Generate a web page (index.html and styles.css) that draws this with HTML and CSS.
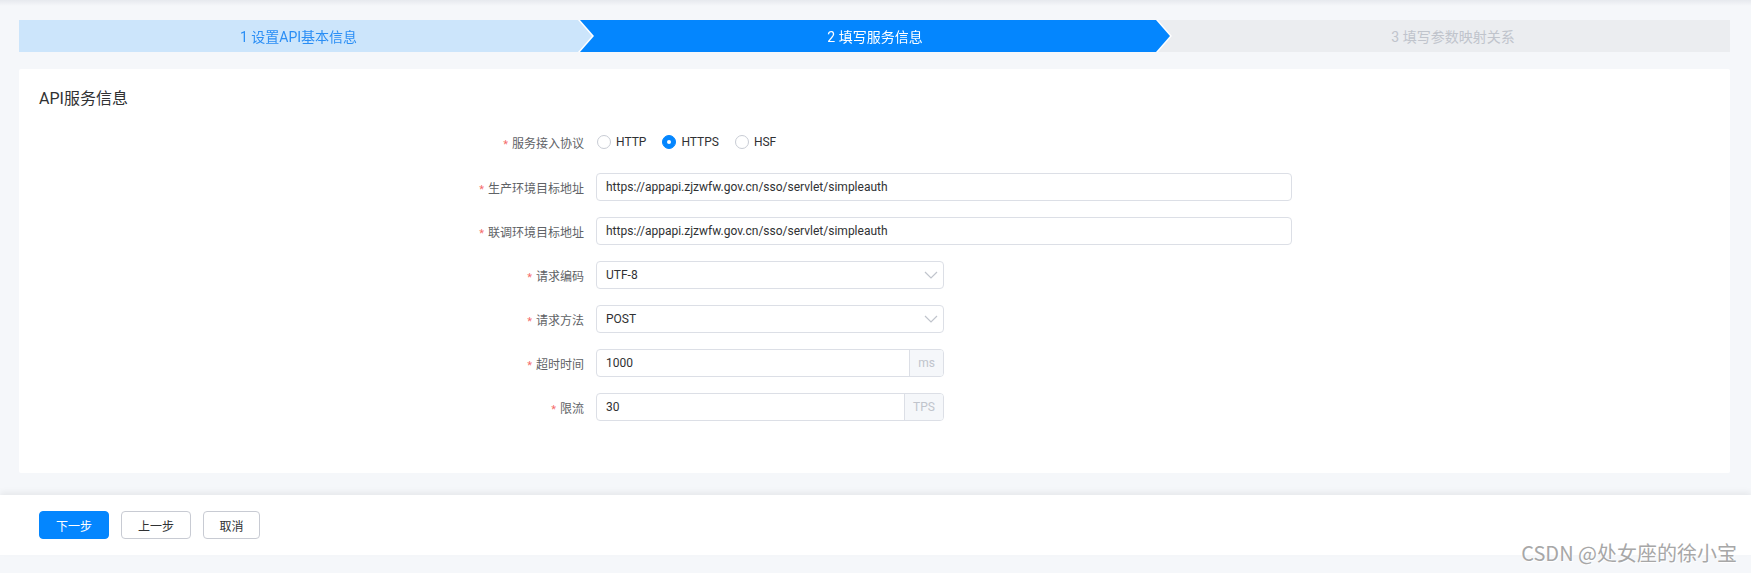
FILE: index.html
```html
<!DOCTYPE html>
<html lang="zh-CN">
<head>
<meta charset="utf-8">
<title>API服务信息</title>
<link rel="stylesheet" href="styles.css">
</head>
<body>
<div class="topshade"></div>
<div class="main">
  <div class="steps">
    <div class="step step-done"><div class="step-shape">1 设置API基本信息</div></div>
    <div class="step step-active"><div class="step-shape">2 填写服务信息</div></div>
    <div class="step step-wait"><div class="step-shape">3 填写参数映射关系</div></div>
  </div>
  <div class="card">
    <div class="card-title">API服务信息</div>
    <div class="form">
      <div class="row">
        <label class="label"><span class="req">*</span>服务接入协议</label>
        <div class="radios">
          <span class="radio"><span class="dot"></span>HTTP</span>
          <span class="radio checked"><span class="dot"></span>HTTPS</span>
          <span class="radio"><span class="dot"></span>HSF</span>
        </div>
      </div>
      <div class="row">
        <label class="label"><span class="req">*</span>生产环境目标地址</label>
        <div class="input long">https://appapi.zjzwfw.gov.cn/sso/servlet/simpleauth</div>
      </div>
      <div class="row">
        <label class="label"><span class="req">*</span>联调环境目标地址</label>
        <div class="input long">https://appapi.zjzwfw.gov.cn/sso/servlet/simpleauth</div>
      </div>
      <div class="row">
        <label class="label"><span class="req">*</span>请求编码</label>
        <div class="input short select"><span class="val">UTF-8</span>
          <svg class="arrow" width="14" height="8" viewBox="0 0 14 8"><path d="M1 1 L7 7 L13 1" fill="none" stroke="#c0c4cc" stroke-width="1.2"/></svg>
        </div>
      </div>
      <div class="row">
        <label class="label"><span class="req">*</span>请求方法</label>
        <div class="input short select"><span class="val">POST</span>
          <svg class="arrow" width="14" height="8" viewBox="0 0 14 8"><path d="M1 1 L7 7 L13 1" fill="none" stroke="#c0c4cc" stroke-width="1.2"/></svg>
        </div>
      </div>
      <div class="row">
        <label class="label"><span class="req">*</span>超时时间</label>
        <div class="input short group"><span class="val">1000</span><span class="append ms">ms</span></div>
      </div>
      <div class="row">
        <label class="label"><span class="req">*</span>限流</label>
        <div class="input short group"><span class="val">30</span><span class="append tps">TPS</span></div>
      </div>
    </div>
  </div>
</div>
<div class="footer">
  <button class="btn primary">下一步</button>
  <button class="btn w70">上一步</button>
  <button class="btn w57">取消</button>
  <div class="watermark">CSDN @处女座的徐小宝</div>
</div>
</body>
</html>
```
FILE: styles.css
```css
* { box-sizing: border-box; }
html, body {
  margin: 0;
  padding: 0;
}
body {
  width: 1751px;
  height: 573px;
  overflow: hidden;
  background: #f5f7fa;
  font-family: Roboto, "Noto Sans CJK SC", sans-serif;
  color: #303133;
  position: relative;
}
.topshade {
  height: 6px;
  background: linear-gradient(#e6e9ee, #f5f7fa);
}
.main {
  padding: 14px 21px 0 19px;
}
.steps {
  display: flex;
  height: 32px;
}
.step {
  height: 32px;
  filter: drop-shadow(2px 0 0 #ffffff);
}
.step-done { flex: 0 0 573px; }
.step-active { flex: 0 0 590px; }
.step-wait { flex: 1 1 auto; }
.step + .step {
  margin-left: -12px;
}
.step-shape {
  height: 32px;
  display: flex;
  align-items: center;
  justify-content: center;
  font-size: 14px;
}
.step-done .step-shape {
  background: #cce5fb;
  color: #2a8ef5;
  padding-right: 14px;
  clip-path: polygon(0 0, calc(100% - 14px) 0, 100% 50%, calc(100% - 14px) 100%, 0 100%);
}
.step-active .step-shape {
  background: #0486fe;
  color: #ffffff;
  clip-path: polygon(0 0, calc(100% - 14px) 0, 100% 50%, calc(100% - 14px) 100%, 0 100%, 14px 50%);
}
.step-wait { filter: none; }
.step-wait .step-shape {
  background: #ebedf0;
  color: #c0c4cc;
  padding-left: 18px;
  clip-path: polygon(0 0, 100% 0, 100% 100%, 0 100%, 14px 50%);
}
.card {
  margin-top: 17px;
  height: 404px;
  background: #ffffff;
  border-radius: 2px;
  padding: 19px 20px 0 20px;
}
.card-title {
  font-size: 16px;
  line-height: 22px;
  color: #303133;
  margin-bottom: 18px;
}
.form {
  display: flex;
  flex-direction: column;
  gap: 16px;
}
.row {
  display: flex;
  align-items: center;
  height: 28px;
  gap: 12px;
}
.row:first-child {
  margin-bottom: 1px;
}
.label {
  width: 545px;
  text-align: right;
  font-size: 12px;
  color: #606266;
}
.req {
  color: #f56c6c;
  margin-right: 4px;
  font-size: 11px;
}
.radios {
  display: flex;
  align-items: center;
  gap: 16px;
  padding-left: 1px;
}
.radio {
  display: flex;
  align-items: center;
  gap: 5px;
  font-size: 12px;
  color: #303133;
}
.dot {
  width: 14px;
  height: 14px;
  border-radius: 50%;
  border: 1px solid #c8ccd4;
  background: #fff;
  display: inline-block;
  position: relative;
}
.radio.checked .dot {
  background: #0486fe;
  border-color: #0486fe;
}
.radio.checked .dot::after {
  content: "";
  position: absolute;
  width: 4px;
  height: 4px;
  border-radius: 50%;
  background: #fff;
  left: 4px;
  top: 4px;
}
.input {
  height: 28px;
  border: 1px solid #dcdfe6;
  border-radius: 4px;
  font-size: 12px;
  color: #303133;
  display: flex;
  align-items: center;
  padding-left: 9px;
}
.long { width: 696px; }
.short { width: 348px; }
.select {
  justify-content: space-between;
  padding-right: 5px;
}
.group {
  padding-right: 0;
  justify-content: space-between;
}
.append {
  height: 26px;
  background: #f5f7fa;
  border-left: 1px solid #dcdfe6;
  border-radius: 0 3px 3px 0;
  color: #c0c4cc;
  display: flex;
  align-items: center;
  justify-content: center;
}
.ms { width: 34px; }
.tps { width: 39px; }
.footer {
  margin-top: 22px;
  height: 60px;
  background: #ffffff;
  box-shadow: 0 -3px 6px rgba(0, 0, 0, 0.06);
  display: flex;
  align-items: flex-start;
  padding: 16px 0 0 39px;
  gap: 12px;
  position: relative;
}
.btn {
  height: 28px;
  border: 1px solid #c8cbd3;
  border-radius: 4px;
  background: #ffffff;
  color: #303133;
  font-family: Roboto, "Noto Sans CJK SC", sans-serif;
  font-size: 12px;
  padding: 0;
  margin: 0;
}
.primary {
  width: 70px;
  background: #0486fe;
  border-color: #0486fe;
  color: #ffffff;
}
.w70 { width: 70px; }
.w57 { width: 57px; }
.watermark {
  position: absolute;
  right: 14px;
  top: 46px;
  font-size: 20px;
  line-height: 24px;
  color: #a7a7a7;
  text-shadow: 0 0 2px #ffffff, 1px 1px 1px #ffffff;
  font-family: "Noto Sans CJK SC", sans-serif;
}
```
